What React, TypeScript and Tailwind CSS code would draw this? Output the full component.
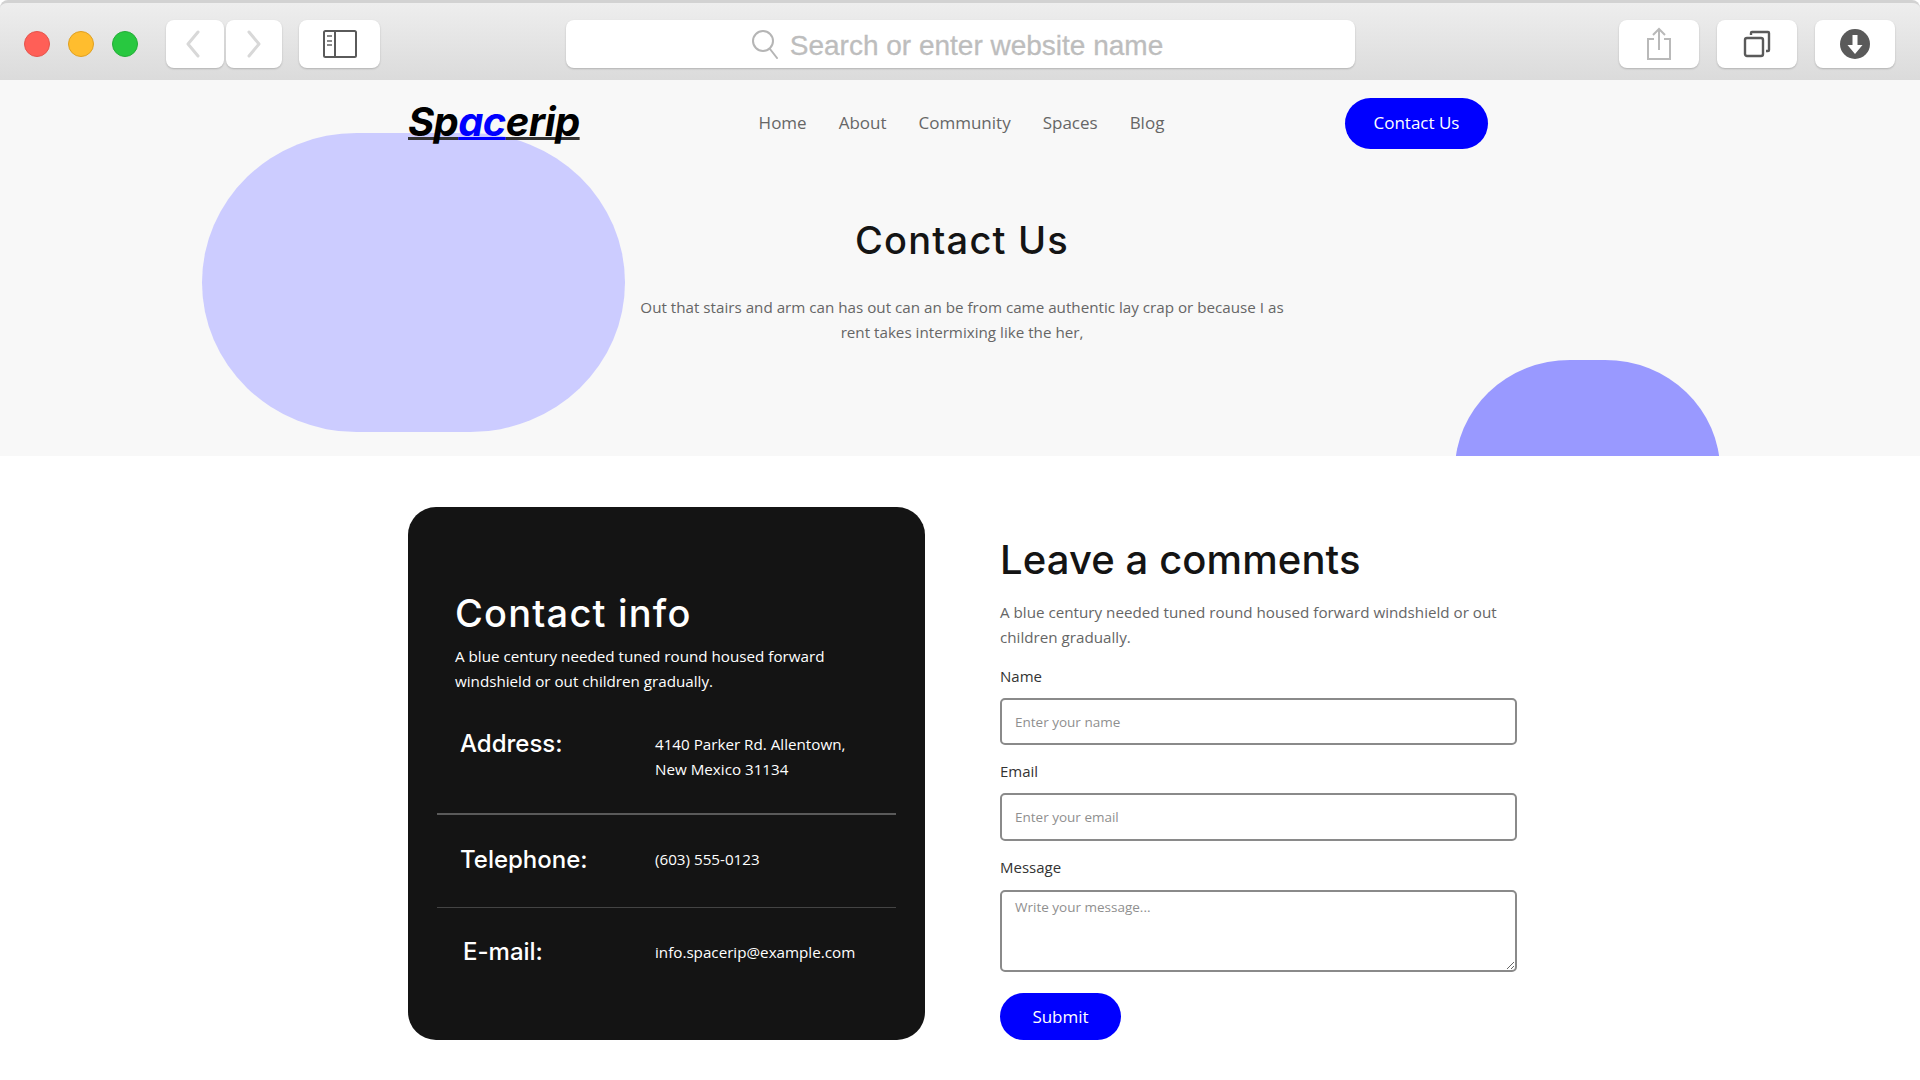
import React from "react";

const open = "font-['Open_Sans',sans-serif]";
const head = "font-['Inter',sans-serif]";
const logoPart = "underline decoration-[3px] underline-offset-[1px] [text-decoration-skip-ink:none]";

const ToolBtn = ({ className, children }: { className: string; children?: React.ReactNode }) => (
  <div className={`h-12 bg-white rounded-lg shadow-[0_1px_2px_rgba(0,0,0,0.2)] flex items-center justify-center ${className}`}>
    {children}
  </div>
);

const Toolbar = () => (
  <div className="h-20 flex items-center bg-gradient-to-b from-[#eeeeee] to-[#dbdbdb] border-t-[3px] border-[#d2d2d2] rounded-t-lg pt-[5px]">
    <div className="flex gap-[18px] ml-6">
      <div className="w-[26px] h-[26px] rounded-full bg-[#ff5f57] border border-[#e5534b]" />
      <div className="w-[26px] h-[26px] rounded-full bg-[#ffbd2e] border border-[#e0a020]" />
      <div className="w-[26px] h-[26px] rounded-full bg-[#28c840] border border-[#22ad36]" />
    </div>
    <div className="flex gap-[2px] ml-7">
      <ToolBtn className="w-[58px] pr-1">
        <svg width="16" height="28" viewBox="0 0 16 28" fill="none" stroke="#d8d8d8" strokeWidth="3" strokeLinecap="round" strokeLinejoin="round">
          <path d="M13 2 3 14l10 12" />
        </svg>
      </ToolBtn>
      <ToolBtn className="w-[56px]">
        <svg width="16" height="28" viewBox="0 0 16 28" fill="none" stroke="#d8d8d8" strokeWidth="3" strokeLinecap="round" strokeLinejoin="round">
          <path d="M3 2l10 12L3 26" />
        </svg>
      </ToolBtn>
    </div>
    <ToolBtn className="w-[81px] ml-[17px]">
      <svg width="34" height="28" viewBox="0 0 34 28" fill="none">
        <rect x="1" y="1" width="32" height="26" rx="1.5" stroke="#5a5a5a" strokeWidth="2" />
        <path d="M12 1v26" stroke="#5a5a5a" strokeWidth="2" />
        <path d="M4 6h5M4 11h5M4 15h5" stroke="#8a8a8a" strokeWidth="2" />
      </svg>
    </ToolBtn>
    <ToolBtn className="w-[789px] ml-[186px] pr-[7px]">
      <svg width="28" height="30" viewBox="0 0 28 30" fill="none" stroke="#b5b5b5" strokeWidth="2" strokeLinecap="round">
        <circle cx="12" cy="12" r="10" />
        <path d="M19 20l7 9" />
      </svg>
      <span className="ml-[11px] mt-[3px] text-[28px] text-[#bdbdbd] [-webkit-text-stroke:0.3px_#bdbdbd] font-['Liberation_Sans',sans-serif]">Search or enter website name</span>
    </ToolBtn>
    <ToolBtn className="w-20 ml-[264px]">
      <svg width="26" height="34" viewBox="0 0 26 34" fill="none" stroke="#b9b9b9" strokeWidth="2">
        <path d="M8 12H2v20h22V12h-6" />
        <path d="M13 23V2M7 8l6-6 6 6" />
      </svg>
    </ToolBtn>
    <ToolBtn className="w-20 ml-[18px]">
      <svg width="28" height="28" viewBox="0 0 28 28" fill="none" stroke="#5a5a5a" strokeWidth="2.4">
        <rect x="2" y="8" width="18" height="18" rx="2" />
        <path d="M8 5V3a1 1 0 0 1 1-1h16a1 1 0 0 1 1 1v17a1 1 0 0 1-1 1h-2" />
      </svg>
    </ToolBtn>
    <ToolBtn className="w-20 ml-[18px]">
      <svg width="32" height="32" viewBox="0 0 32 32">
        <circle cx="16" cy="16" r="15" fill="#5a5a5a" />
        <path d="M13.500 7h5v10h5L16 26 8.500 17h5z" fill="#fff" />
      </svg>
    </ToolBtn>
  </div>
);

const Hero = () => (
  <div className="relative h-[376px] bg-[#f8f8f8] overflow-hidden">
    <div className="absolute left-[202px] top-[53px] w-[423px] h-[299px] bg-[#ccccff] rounded-[155px/150px]" />
    <div className="absolute left-[1455px] top-[280px] w-[265px] h-[220px] bg-[#9999ff] rounded-[115px/110px]" />
    <div className="relative">
      <div className="flex items-center justify-between w-[1080px] ml-[408px] pt-[18px]">
        <div className="w-[172px] pb-[4px] text-[40px] leading-[47px] font-bold italic tracking-[-0.6px] text-black font-['Inter',sans-serif]">
          <span className={`${logoPart} decoration-[#333333]`}>Sp</span>
          <span className={`${logoPart} text-[#0000ff] decoration-[#0000ff]`}>ac</span>
          <span className={`${logoPart} decoration-[#333333]`}>erip</span>
        </div>
        <nav className={`flex gap-8 pb-[2px] -ml-[2px] text-[17px] text-[#666666] ${open}`}>
          <span>Home</span>
          <span>About</span>
          <span>Community</span>
          <span>Spaces</span>
          <span>Blog</span>
        </nav>
        <button className={`w-[143px] h-[51px] pb-[1px] rounded-full bg-[#0000ff] text-white text-[17px] ${open}`}>Contact Us</button>
      </div>
      <div className="flex flex-col items-center ml-[4px] pt-[66px]">
        <h1 className={`text-[38px] leading-[50px] font-medium tracking-[1.2px] text-[#141414] ${head}`}>Contact Us</h1>
        <p className={`w-[660px] mt-[30px] text-center text-[15.2px] leading-[25px] text-[#666666] ${open}`}>
          Out that stairs and arm can has out can an be from came authentic lay crap or because I as rent takes intermixing like the her,
        </p>
      </div>
    </div>
  </div>
);

const InfoRow = ({ label, labelClass, children }: { label: string; labelClass: string; children: React.ReactNode }) => (
  <div className="flex items-center">
    <div className={`text-[24px] leading-8 font-medium text-white ${labelClass} ${head}`}>{label}</div>
    <div className={`text-[15.2px] leading-[25px] text-white ${open}`}>{children}</div>
  </div>
);

const ContactCard = () => (
  <div className="w-[517px] h-[533px] bg-[#141414] rounded-[28px] pt-[79px]">
    <h2 className={`ml-[47px] text-[38px] leading-[54px] font-medium tracking-[1.2px] text-white ${head}`}>Contact info</h2>
    <p className={`ml-[47px] w-[430px] mt-[4px] text-[15.2px] leading-[25px] text-white ${open}`}>
      A blue century needed tuned round housed forward windshield or out children gradually.
    </p>
    <div className="mx-[29px] mt-[21px]">
      <div className="h-[100px] pt-[17px] border-b-2 border-[#5a5a5a]">
        <InfoRow label="Address:" labelClass="ml-[23px] w-[195px] self-start -mt-[4px]">
          4140 Parker Rd. Allentown,<br />New Mexico 31134
        </InfoRow>
      </div>
      <div className="h-[93px] pb-[3px] flex items-center border-b border-[#444444]">
        <InfoRow label="Telephone:" labelClass="ml-[23px] w-[195px]">
          (603) 555-0123
        </InfoRow>
      </div>
      <div className="pt-[28px]">
        <InfoRow label="E-mail:" labelClass="ml-[26px] w-[192px]">
          info.spacerip@example.com
        </InfoRow>
      </div>
    </div>
  </div>
);

const fieldClass = `block w-full border-2 border-[#8a8a8a] rounded-[5px] px-[13px] text-[13.5px] text-[#333333] placeholder:text-[#8f8f8f] bg-white ${open}`;

const CommentForm = () => (
  <div className="w-[517px] ml-[75px]">
    <h2 className={`mt-[25px] text-[40px] leading-[56px] font-medium tracking-[0.1px] text-[#141414] ${head}`}>Leave a comments</h2>
    <p className={`mt-[12px] text-[15.2px] leading-[25px] text-[#666666] ${open}`}>
      A blue century needed tuned round housed forward windshield or out children gradually.
    </p>
    <label className={`block mt-[14px] mb-[10px] text-[15px] leading-6 text-[#333333] ${open}`}>Name</label>
    <input className={`${fieldClass} h-[47px]`} placeholder="Enter your name" />
    <label className={`block mt-[14px] mb-[10px] text-[15px] leading-6 text-[#333333] ${open}`}>Email</label>
    <input className={`${fieldClass} h-[48px]`} placeholder="Enter your email" />
    <label className={`block mt-[14px] mb-[11px] text-[15px] leading-6 text-[#333333] ${open}`}>Message</label>
    <textarea className={`${fieldClass} h-[82px] py-[5px] resize-y`} placeholder="Write your message..." />
    <button className={`w-[121px] h-[47px] mt-[21px] rounded-full bg-[#0000ff] text-white text-[17px] ${open}`}>Submit</button>
  </div>
);

export default function App() {
  return (
    <div className="w-[1920px] h-[1080px] bg-white overflow-hidden">
      <Toolbar />
      <Hero />
      <div className="flex pl-[408px] pt-[51px]">
        <ContactCard />
        <CommentForm />
      </div>
    </div>
  );
}
